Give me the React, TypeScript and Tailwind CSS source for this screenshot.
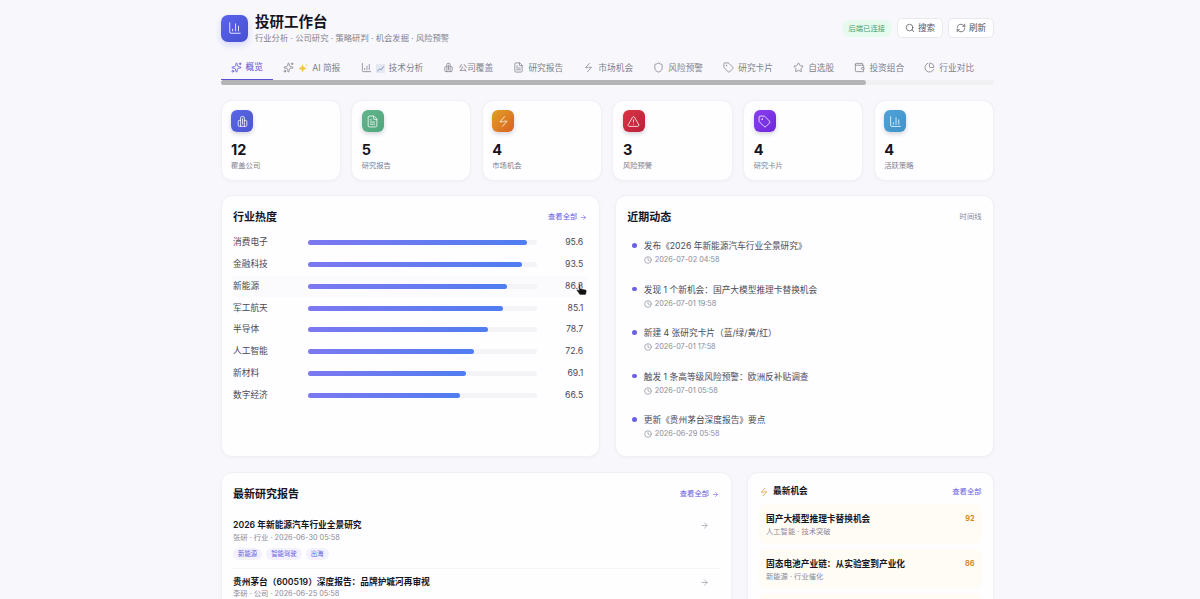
import React from "react";
import { AlertTriangle, ArrowRight, ChartColumn, ChartColumnIncreasing, Clock, FileText, PieChart, RefreshCw, Search, Shield, Sparkles, Star, Tag, Wallet } from "lucide-react";

type IP = { size?: number; strokeWidth?: number; className?: string };
const Buildings = ({ size = 12, strokeWidth = 1.7, className }: IP) => (
  <svg width={size} height={size} viewBox="0 0 24 24" fill="none" stroke="currentColor" strokeWidth={strokeWidth} strokeLinecap="round" strokeLinejoin="round" className={className}>
    <path d="M8.5 21V5a2 2 0 0 1 2-2h3a2 2 0 0 1 2 2v16" />
    <path d="M8.5 10H6a2 2 0 0 0-2 2v7a2 2 0 0 0 2 2h12a2 2 0 0 0 2-2v-7a2 2 0 0 0-2-2h-2.500" />
    <path d="M12 7v10" />
  </svg>
);
const Bolt = ({ size = 12, strokeWidth = 1.7, className }: IP) => (
  <svg width={size} height={size} viewBox="0 0 24 24" fill="none" stroke="currentColor" strokeWidth={strokeWidth} strokeLinecap="round" strokeLinejoin="round" className={className}>
    <path d="M14 3 L5.500 12.500 H11" />
    <path d="M13 11.500 H18.500 L10 21" />
  </svg>
);
const Spark = () => (
  <svg width="10" height="10" viewBox="0 0 12 12" className="shrink-0">
    <path d="M5.500 1.500 L6.900 4.900 L10.500 6.500 L6.900 8 L5.500 11.500 L4.100 8 L.5 6.500 L4.100 4.900 Z" fill="#f6c445" />
    <path d="M10 .5 L10.500 2 L12 2.500 L10.500 3 L10 4.500 L9.500 3 L8 2.500 L9.500 2 Z" fill="#f9d77a" />
  </svg>
);
const Graph = () => (
  <svg width="9" height="9" viewBox="0 0 12 12" className="shrink-0">
    <rect width="12" height="12" fill="#e4e8f2" />
    <path d="M1.500 9.500 L5 6.500 L7 7.500 L10.500 3" stroke="#7f93c4" strokeWidth="1.3" fill="none" />
  </svg>
);

const tabs: [any, React.ReactNode, string][] = [
  [Sparkles, null, "概览"],
  [Sparkles, <Spark />, "AI 简报"],
  [ChartColumnIncreasing, <Graph />, "技术分析"],
  [Buildings, null, "公司覆盖"],
  [FileText, null, "研究报告"],
  [Bolt, null, "市场机会"],
  [Shield, null, "风险预警"],
  [Tag, null, "研究卡片"],
  [Star, null, "自选股"],
  [Wallet, null, "投资组合"],
  [PieChart, null, "行业对比"],
];

const stats = [
  { I: Buildings, n: "12", l: "覆盖公司", c: "bg-gradient-to-br from-[#5b68e8] to-[#4a55d0]" },
  { I: FileText, n: "5", l: "研究报告", c: "bg-gradient-to-br from-[#62b58c] to-[#50a67c]" },
  { I: Bolt, n: "4", l: "市场机会", c: "bg-gradient-to-br from-[#dfa023] to-[#d95f22]" },
  { I: AlertTriangle, n: "3", l: "风险预警", c: "bg-gradient-to-br from-[#dc3545] to-[#b91f3a]" },
  { I: Tag, n: "4", l: "研究卡片", c: "bg-gradient-to-br from-[#8a3ef0] to-[#6d28d9]" },
  { I: ChartColumn, n: "4", l: "活跃策略", c: "bg-gradient-to-br from-[#4fa3d8] to-[#3f93c8]" },
];

const heat: [string, number, string][] = [
  ["消费电子", 95.6, "95.6"],
  ["金融科技", 93.5, "93.5"],
  ["新能源", 86.8, "86.8"],
  ["军工航天", 85.1, "85.1"],
  ["半导体", 78.7, "78.7"],
  ["人工智能", 72.6, "72.6"],
  ["新材料", 69.1, "69.1"],
  ["数字经济", 66.5, "66.5"],
];

const activity = [
  ["发布《2026 年新能源汽车行业全景研究》", "2026-07-02 04:58"],
  ["发现 1 个新机会：国产大模型推理卡替换机会", "2026-07-01 19:58"],
  ["新建 4 张研究卡片（蓝/绿/黄/红）", "2026-07-01 17:58"],
  ["触发 1 条高等级风险预警：欧洲反补贴调查", "2026-07-01 05:58"],
  ["更新《贵州茅台深度报告》要点", "2026-06-29 05:58"],
];

const panel = "bg-[#fefdff] rounded-[11px] border border-[#f0f0f5] shadow-[0_1px_3px_rgba(30,30,80,0.04)]";

export default function App() {
  return (
    <div className="h-[599px] overflow-hidden bg-[#f8f8fc] text-[#15151f] font-['Inter','Noto_Sans_CJK_SC',sans-serif]">
      <div className="ml-[220.5px] w-[773.5px]">
        <header className="h-[56px] flex items-center justify-between">
          <div className="flex items-center gap-[7px] pl-[.5px]">
            <div className="w-[27px] h-[27px] rounded-[7px] bg-gradient-to-br from-[#5b63ee] to-[#4650cf] shadow-[0_3px_7px_rgba(80,90,230,0.22)] flex items-center justify-center">
              <ChartColumn size={14} strokeWidth={1.6} className="text-white/90" />
            </div>
            <div>
              <h1 className="text-[14.5px] leading-[18px] font-bold">投研工作台</h1>
              <p className="text-[8.3px] leading-[12px] mt-[1px] text-[#81818d]">行业分析 · 公司研究 · 策略研判 · 机会发掘 · 风险预警</p>
            </div>
          </div>
          <div className="flex items-center gap-[5px]">
            <span className="h-[17px] px-[7px] rounded-full bg-[#e6fbee] text-[#4d9f70] text-[7.3px] leading-[17px]">后端已连接</span>
            <button className="h-[20px] w-[46px] rounded-[5px] border border-[#e8e8ee] bg-white flex items-center justify-center gap-[3px] text-[8.6px] text-[#55555f]">
              <Search size={10} strokeWidth={1.8} />搜索
            </button>
            <button className="h-[20px] w-[46px] rounded-[5px] border border-[#e8e8ee] bg-white flex items-center justify-center gap-[3px] text-[8.6px] text-[#55555f]">
              <RefreshCw size={10} strokeWidth={1.8} />刷新
            </button>
          </div>
        </header>

        <nav className="overflow-hidden">
          <div className="flex items-center h-[24px] whitespace-nowrap">
            {tabs.map(([I, extra, t], i) => (
              <div
                key={t}
                className={`h-[24px] flex items-center gap-[4px] px-[10.1px] shrink-0 text-[8.7px] ${i === 0 ? "text-[#5a50d8] border-b border-[#5a50d8]" : "text-[#80808c]"}`}
              >
                <I size={11} strokeWidth={1.7} className="-mt-[1px]" />
                {extra}
                <span className="pt-[1px]">{t}</span>
              </div>
            ))}
          </div>
          <div className="h-[5px] bg-[#f1f1f4] rounded-[3px]">
            <div className="h-[5px] w-[645px] rounded-[3px] bg-[#b4b4b6]" />
          </div>
        </nav>

        <section className="grid grid-cols-6 gap-[10.5px] mt-[15px]">
          {stats.map(({ I, n, l, c }) => (
            <div key={l} className={`${panel} h-[81px] pl-[9.5px] pt-[9px]`}>
              <div className={`w-[22px] h-[22px] rounded-[6px] ${c} shadow-[0_2px_4px_rgba(40,40,70,0.2)] flex items-center justify-center`}>
                <I size={13} strokeWidth={1.6} className="text-white/90" />
              </div>
              <div className="text-[14.5px] leading-[18px] font-bold mt-[9px]">{n}</div>
              <div className="text-[7.3px] leading-[10px] text-[#80808c] mt-[2px]">{l}</div>
            </div>
          ))}
        </section>

        <section className="grid grid-cols-2 gap-[15px] mt-[14px]">
          <div className={`${panel} h-[262px] px-[11.5px] pt-[14px]`}>
            <div className="flex items-center justify-between h-[14px]">
              <h2 className="text-[11px] font-bold">行业热度</h2>
              <span className="flex items-center gap-[3px] text-[7.3px] text-[#6a5fe0]">查看全部<ArrowRight size={7} /></span>
            </div>
            <div className="mt-[8px]">
              {heat.map(([name, v, s], i) => (
                <div key={name} className={`h-[21.75px] flex items-center ${i === 2 ? "bg-[#fbfbfd]" : ""}`}>
                  <span className="w-[75px] text-[8.7px] text-[#4a4a56]">{name}</span>
                  <div className="w-[229px] h-[5px] rounded-full bg-[#f4f4f7]">
                    <div className="h-[5px] rounded-full bg-gradient-to-r from-[#7c78f0] to-[#4f7df0]" style={{ width: `${v}%` }} />
                  </div>
                  <span className="flex-1 text-right pr-[4px] text-[8.7px] text-[#4a4a56]">{s}</span>
                </div>
              ))}
            </div>
          </div>

          <div className={`${panel} h-[262px] px-[11.5px] pt-[14px] relative`}>
            <div className="flex items-center justify-between h-[14px]">
              <h2 className="text-[11px] font-bold">近期动态</h2>
              <span className="text-[7.3px] text-[#8a8a96]">时间线</span>
            </div>
            <div className="mt-[15px] pl-[5px]">
              {activity.map(([t, d]) => (
                <div key={d} className="h-[43.5px] flex gap-[7px]">
                  <span className="w-[4.5px] h-[4.5px] mt-[4px] rounded-full bg-[#6a5fe0] shrink-0" />
                  <div>
                    <div className="text-[8.7px] leading-[14px] text-[#4a4a56]">{t}</div>
                    <div className="flex items-center gap-[3px] text-[7.3px] leading-[12px] text-[#8a8a96] mt-[1px]">
                      <Clock size={8} />{d}
                    </div>
                  </div>
                </div>
              ))}
            </div>
          </div>
        </section>

        <section className="flex gap-[15px] mt-[15px]">
          <div className={`${panel} w-[511px] h-[200px] px-[11.5px] pt-[14px]`}>
            <div className="flex items-center justify-between h-[14px]">
              <h2 className="text-[11px] font-bold">最新研究报告</h2>
              <span className="flex items-center gap-[3px] text-[7.3px] text-[#6a5fe0]">查看全部<ArrowRight size={7} /></span>
            </div>
            <div className="mt-[18px] border-b border-[#f5f5f8] h-[50px] flex justify-between">
              <div>
                <div className="text-[8.7px] leading-[12px] font-semibold">2026 年新能源汽车行业全景研究</div>
                <div className="text-[7.3px] leading-[10px] text-[#8a8a96] mt-[2px]">张研 · 行业 · 2026-06-30 05:58</div>
                <div className="flex gap-[4px] mt-[5px]">
                  {["新能源", "智能驾驶", "出海"].map((x) => (
                    <span key={x} className="h-[12px] px-[5px] rounded-full bg-[#f3f1fd] text-[#6a5fe0] text-[6.4px] leading-[12px]">{x}</span>
                  ))}
                </div>
              </div>
              <ArrowRight size={9} className="text-[#a0a0aa] mt-[2px] mr-[10px]" />
            </div>
            <div className="pt-[7px] flex justify-between">
              <div>
                <div className="text-[8.7px] leading-[12px] font-semibold">贵州茅台（600519）深度报告：品牌护城河再审视</div>
                <div className="text-[7.3px] leading-[9px] text-[#8a8a96] mt-[1px]">李研 · 公司 · 2026-06-25 05:58</div>
              </div>
              <ArrowRight size={9} className="text-[#a0a0aa] mt-[2px] mr-[10px]" />
            </div>
          </div>

          <div className={`${panel} flex-1 h-[200px] px-[11.5px] pt-[13px]`}>
            <div className="flex items-center justify-between h-[12px]">
              <h2 className="flex items-center gap-[4px] text-[8.7px] font-semibold">
                <Bolt size={10} strokeWidth={1.9} className="text-[#e0a030]" />最新机会
              </h2>
              <span className="text-[7.3px] text-[#6a5fe0]">查看全部</span>
            </div>
            {[
              ["国产大模型推理卡替换机会", "人工智能 · 技术突破", "92"],
              ["固态电池产业链：从实验室到产业化", "新能源 · 行业催化", "86"],
              ["", "", ""],
            ].map(([t, m, s], i) => (
              <div key={i} className={`h-[39.5px] rounded-[7px] bg-[#fffcf6] px-[7px] pt-[9px] flex justify-between ${i === 0 ? "mt-[6px]" : "mt-[5px]"}`}>
                <div>
                  <div className="text-[8.7px] leading-[12px] font-semibold">{t}</div>
                  <div className="text-[7.3px] leading-[10px] text-[#8a8a96] mt-[2px]">{m}</div>
                </div>
                <span className="text-[7.3px] leading-[12px] font-bold text-[#d68a1e]">{s}</span>
              </div>
            ))}
          </div>
        </section>
      </div>
      <svg viewBox="0 0 24 24" width="13" height="15" className="absolute left-[575px] top-[282px]">
        <path d="M7 2 C8.500 1 10 2 10 4 V10 L19 12 C21 12.500 22 14 21.500 16 L20 22 H9 L3 14 C2.500 12.500 4 11 6 12.500 L7 13.500 Z" fill="#111" stroke="#fff" strokeWidth="1" />
      </svg>
    </div>
  );
}
